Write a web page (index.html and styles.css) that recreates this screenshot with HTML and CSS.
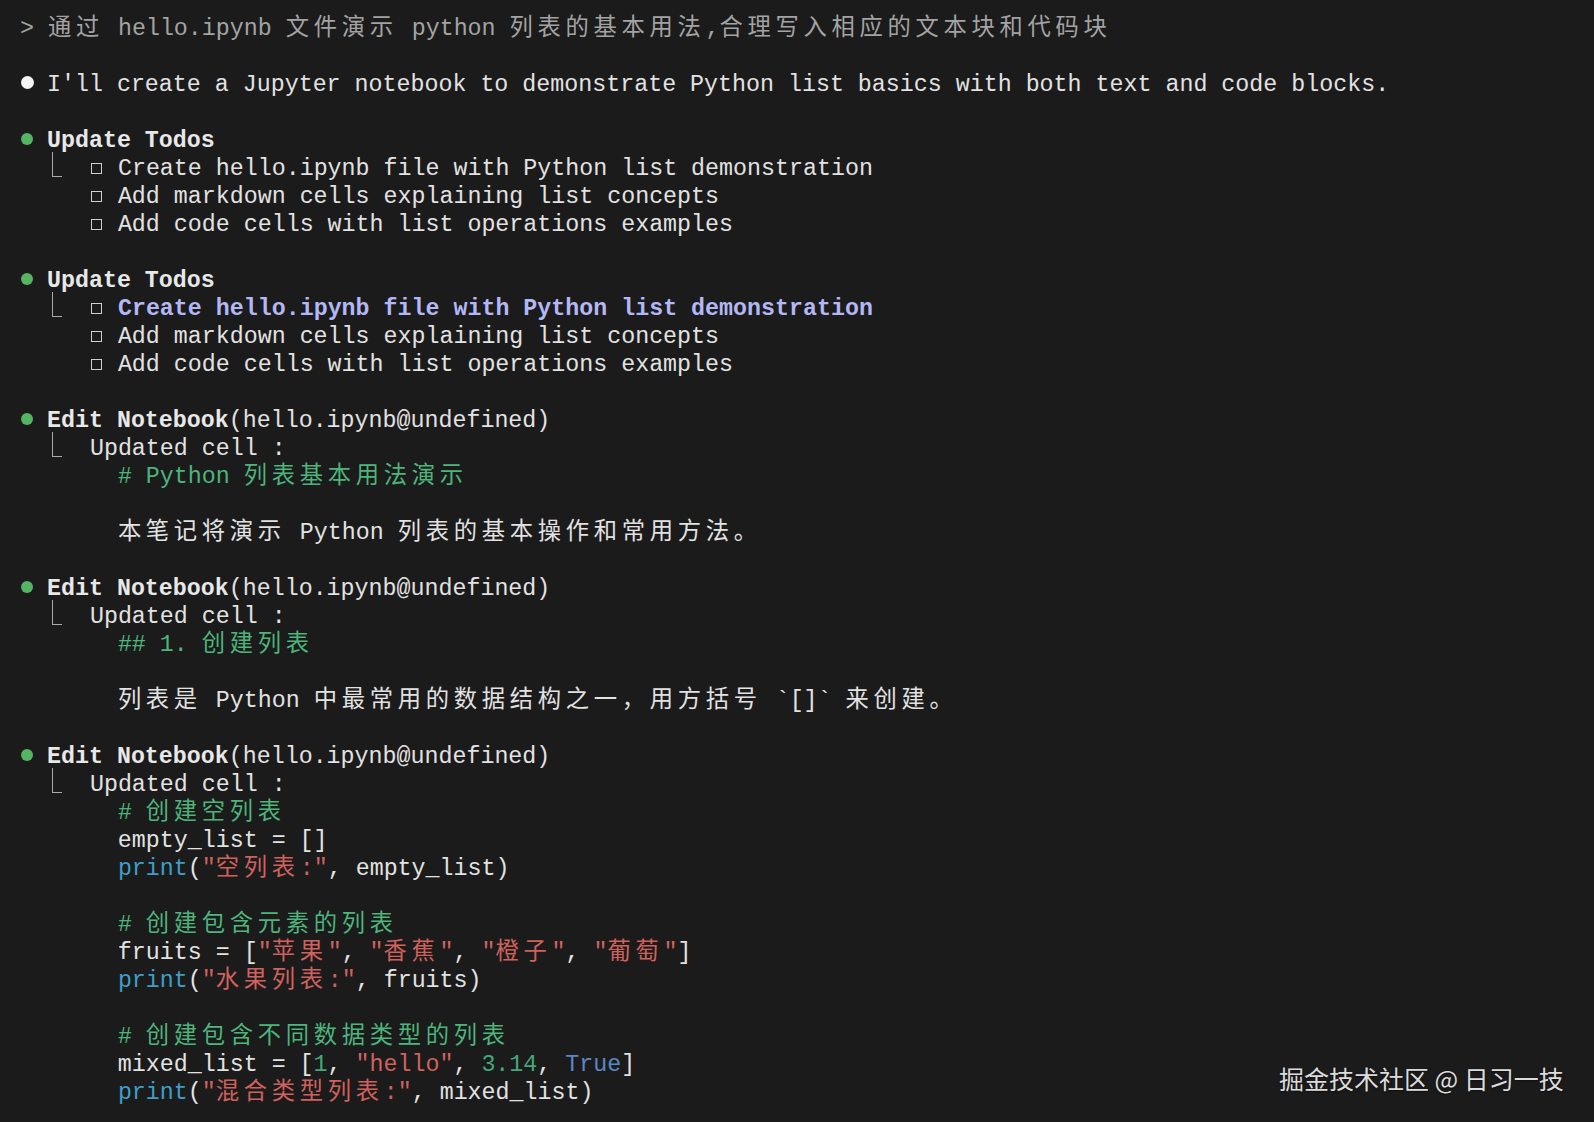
FILE: index.html
```html
<!DOCTYPE html>
<html lang="zh">
<head>
<meta charset="utf-8">
<title>Claude Code - hello.ipynb</title>
<link rel="stylesheet" href="styles.css">
</head>
<body>
<main class="term">
  <div class="ln prompt">&gt; <span class="c">通过</span> hello.ipynb <span class="c">文件演示</span> python <span class="c">列表的基本用法</span>,<span class="c">合理写入相应的文本块和代码块</span></div>
  <div class="ln"></div>

  <div class="ln"><span class="dot white"></span>I'll create a Jupyter notebook to demonstrate Python list basics with both text and code blocks.</div>
  <div class="ln"></div>

  <div class="ln"><span class="dot"></span><span class="b">Update Todos</span></div>
  <div class="ln">  <span class="tree"></span>  <span class="box"></span> Create hello.ipynb file with Python list demonstration</div>
  <div class="ln">     <span class="box"></span> Add markdown cells explaining list concepts</div>
  <div class="ln">     <span class="box"></span> Add code cells with list operations examples</div>
  <div class="ln"></div>

  <div class="ln"><span class="dot"></span><span class="b">Update Todos</span></div>
  <div class="ln">  <span class="tree"></span>  <span class="box"></span> <span class="b lav">Create hello.ipynb file with Python list demonstration</span></div>
  <div class="ln">     <span class="box"></span> Add markdown cells explaining list concepts</div>
  <div class="ln">     <span class="box"></span> Add code cells with list operations examples</div>
  <div class="ln"></div>

  <div class="ln"><span class="dot"></span><span class="b">Edit Notebook</span>(hello.ipynb@undefined)</div>
  <div class="ln">  <span class="tree"></span>  Updated cell :</div>
  <div class="ln">       <span class="g"># Python <span class="c">列表基本用法演示</span></span></div>
  <div class="ln"></div>
  <div class="ln">       <span class="c">本笔记将演示</span> Python <span class="c">列表的基本操作和常用方法。</span></div>
  <div class="ln"></div>

  <div class="ln"><span class="dot"></span><span class="b">Edit Notebook</span>(hello.ipynb@undefined)</div>
  <div class="ln">  <span class="tree"></span>  Updated cell :</div>
  <div class="ln">       <span class="g">## 1. <span class="c">创建列表</span></span></div>
  <div class="ln"></div>
  <div class="ln">       <span class="c">列表是</span> Python <span class="c">中最常用的数据结构之一，用方括号</span> `[]` <span class="c">来创建。</span></div>
  <div class="ln"></div>

  <div class="ln"><span class="dot"></span><span class="b">Edit Notebook</span>(hello.ipynb@undefined)</div>
  <div class="ln">  <span class="tree"></span>  Updated cell :</div>
  <div class="ln">       <span class="g"># <span class="c">创建空列表</span></span></div>
  <div class="ln">       empty_list = []</div>
  <div class="ln">       <span class="k">print</span>(<span class="s">"<span class="c">空列表</span>:"</span>, empty_list)</div>
  <div class="ln"></div>
  <div class="ln">       <span class="g"># <span class="c">创建包含元素的列表</span></span></div>
  <div class="ln">       fruits = [<span class="s">"<span class="c">苹果</span>"</span>, <span class="s">"<span class="c">香蕉</span>"</span>, <span class="s">"<span class="c">橙子</span>"</span>, <span class="s">"<span class="c">葡萄</span>"</span>]</div>
  <div class="ln">       <span class="k">print</span>(<span class="s">"<span class="c">水果列表</span>:"</span>, fruits)</div>
  <div class="ln"></div>
  <div class="ln">       <span class="g"># <span class="c">创建包含不同数据类型的列表</span></span></div>
  <div class="ln">       mixed_list = [<span class="n">1</span>, <span class="s">"hello"</span>, <span class="n">3.14</span>, <span class="t">True</span>]</div>
  <div class="ln">       <span class="k">print</span>(<span class="s">"<span class="c">混合类型列表</span>:"</span>, mixed_list)</div>
</main>
<div class="watermark">掘金技术社区 @ 日习一技</div>
</body>
</html>
```

FILE: styles.css
```css
html, body {
  margin: 0;
  padding: 0;
  background: #1b1b1b;
}

body {
  min-height: 100vh;
  overflow: hidden;
  position: relative;
}

.term {
  padding: 15px 0 0 20px;
  font-family: "Liberation Mono", "Noto Sans CJK SC", monospace;
  font-size: 23.3px;
  color: #e2e2e2;
}

.ln {
  height: 28px;
  line-height: 28px;
  white-space: pre;
}

.prompt {
  color: #a3a3a3;
}

.c {
  font-family: "Noto Sans CJK SC", sans-serif;
  letter-spacing: 4.7px;
  line-height: 0;
}

.b {
  font-weight: bold;
  color: #e8e8e8;
}

.lav {
  color: #b3b7f3;
}

.g {
  color: #4db47c;
}

.s {
  color: #d0625e;
}

.k {
  color: #3e9ec8;
}

.n {
  color: #43a878;
}

.t {
  color: #5b88c6;
}

.dot {
  display: inline-block;
  vertical-align: top;
  width: 12px;
  height: 12px;
  margin: 6px 14px 0 1px;
  border-radius: 50%;
  background: #56b563;
}

.dot.white {
  width: 13px;
  height: 13px;
  margin: 5px 13px 0 1px;
  background: #f4f4f4;
}

.tree {
  display: inline-block;
  vertical-align: top;
  box-sizing: border-box;
  width: 10px;
  height: 25px;
  margin: -3px 0 0 4px;
  border-left: 1.5px solid #a8a8a8;
  border-bottom: 1.5px solid #a8a8a8;
}

.box {
  display: inline-block;
  vertical-align: top;
  box-sizing: border-box;
  width: 11px;
  height: 11px;
  margin: 8px 1.5px 0 1.5px;
  border: 1.5px solid #cfcfcf;
}

.watermark {
  position: absolute;
  left: 1279px;
  top: 1062px;
  font-family: "Noto Sans CJK SC", sans-serif;
  font-size: 25px;
  line-height: 32px;
  color: #dcdcdc;
  white-space: nowrap;
  text-shadow: 0 1px 2px rgba(0,0,0,0.5);
}
```
